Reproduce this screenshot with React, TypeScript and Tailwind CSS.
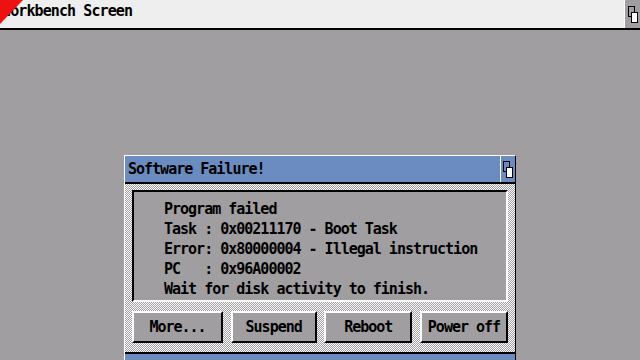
const topaz = { fontFamily: '"DejaVu Sans Mono", "Liberation Mono", monospace' };

function DepthIcon() {
  return (
    <svg width="10" height="17" viewBox="0 0 10 17" shapeRendering="crispEdges">
      <rect x="0.5" y="0.5" width="6" height="10" fill="none" stroke="#000" />
      <rect x="3.5" y="6.5" width="6" height="10" fill="#fff" stroke="#000" />
    </svg>
  );
}

const checker =
  "bg-[image:repeating-conic-gradient(#ffffff_0%_25%,#a09ea0_0%_50%)] bg-[length:2px_2px]";

function Btn({ label, w }: { label: string; w: string }) {
  return (
    <div
      className={`${w} h-[32px] flex items-center justify-center bg-[#a09ea0] border-t-2 border-l-2 border-white border-b-2 border-r-2 border-b-black border-r-black text-[15px] font-bold tracking-[-1px] text-black`}
      style={topaz}
    >
      {label}
    </div>
  );
}

const lines = [
  "Program failed",
  "Task : 0x00211170 - Boot Task",
  "Error: 0x80000004 - Illegal instruction",
  "PC   : 0x96A00002",
  "Wait for disk activity to finish.",
];

export default function App() {
  return (
    <div className="w-[640px] h-[360px] overflow-hidden bg-[#a09ea0] flex flex-col">
      {/* screen title bar */}
      <div className="relative h-[30px] shrink-0 bg-[#eeeeee] border-b-2 border-black flex items-center">
        <span
          className="pl-[2px] text-[15px] font-bold tracking-[-0.9px] text-black leading-none -mt-[6px]"
          style={topaz}
        >
          Workbench Screen
        </span>
        <svg className="absolute left-0 top-0" width="26" height="26" viewBox="0 0 26 26">
          <polygon points="0,0 23,0 0,24" fill="#ee1111" />
        </svg>
        <div className="ml-auto h-full w-[16px] border-l border-white bg-[#a09ea0] flex items-center justify-center">
          <DepthIcon />
        </div>
      </div>

      {/* dialog window */}
      <div className="ml-[124px] mt-[125px] w-[392px] flex-1 flex flex-col border-l border-t border-white border-r border-r-black">
        <div className="h-[26px] shrink-0 bg-[#6a8cc0] flex items-center">
          <span
            className="pl-[3px] text-[15px] font-bold tracking-[-1px] text-black"
            style={topaz}
          >
            Software Failure!
          </span>
          <div className="ml-auto h-full w-[15px] border-l border-white flex items-center justify-center">
            <DepthIcon />
          </div>
        </div>
        <div className="h-[2px] bg-black shrink-0" />
        <div className={`h-[168px] shrink-0 ${checker} pt-[6px] px-[7px] flex flex-col`}>
          <div className="h-[112px] bg-[#a09ea0] border-t-2 border-l-2 border-black border-b-2 border-r-2 border-b-white border-r-white pl-[30px] pt-[7px]">
            {lines.map((l) => (
              <div
                key={l}
                className="h-[20px] leading-[20px] whitespace-pre text-[15px] font-bold tracking-[-1px] text-black"
                style={topaz}
              >
                {l}
              </div>
            ))}
          </div>
          <div className="mt-[9px] flex justify-between">
            <Btn label="More..." w="w-[91px]" />
            <Btn label="Suspend" w="w-[86px]" />
            <Btn label="Reboot" w="w-[88px]" />
            <Btn label="Power off" w="w-[88px]" />
          </div>
        </div>
        <div className="h-[2px] bg-black shrink-0" />
        <div className="flex-1 bg-[#6a8cc0]" />
      </div>
    </div>
  );
}
